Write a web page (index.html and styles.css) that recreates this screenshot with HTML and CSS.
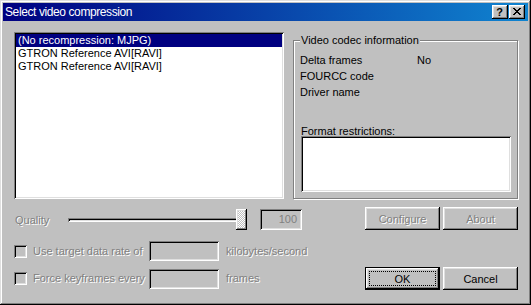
FILE: index.html
```html
<!DOCTYPE html>
<html>
<head>
<meta charset="utf-8">
<link rel="stylesheet" href="styles.css">
</head>
<body>
<div class="window">
  <div class="titlebar">
    <span class="title">Select video compression</span>
    <div class="tb-buttons">
      <span class="tb-btn help">?</span>
      <span class="tb-btn close"><svg width="8" height="7" viewBox="0 0 8 7" shape-rendering="crispEdges"><path d="M0 0h2v1H0zM6 0h2v1H6zM1 1h2v1H1zM5 1h2v1H5zM2 2h4v1H2zM3 3h2v1H3zM2 4h4v1H2zM1 5h2v1H1zM5 5h2v1H5zM0 6h2v1H0zM6 6h2v1H6z" fill="#000"/></svg></span>
    </div>
  </div>
  <div class="client">
    <div class="top">
      <div class="listbox sunken">
        <div class="item selected">(No recompression: MJPG)</div>
        <div class="item">GTRON Reference AVI[RAVI]</div>
        <div class="item">GTRON Reference AVI[RAVI]</div>
      </div>
      <div class="group">
        <span class="legend">Video codec information</span>
        <div class="info-row"><span class="info-key">Delta frames</span><span>No</span></div>
        <div class="info-row"><span class="info-key">FOURCC code</span><span></span></div>
        <div class="info-row"><span class="info-key">Driver name</span><span></span></div>
        <div class="fmt-label">Format restrictions:</div>
        <div class="fmt-box sunken"></div>
      </div>
    </div>
    <div class="row row-a">
      <span class="dis q-label">Quality</span>
      <div class="slider"><div class="track"></div><div class="thumb"></div></div>
      <div class="q-edit sunken">100</div>
      <div class="btn-pair">
        <button class="btn dis" type="button">Configure</button>
        <button class="btn dis" type="button">About</button>
      </div>
    </div>
    <div class="row row-b">
      <span class="check sunken"></span>
      <span class="dis cb-label">Use target data rate of</span>
      <span class="edit-small sunken"></span>
      <span class="dis unit">kilobytes/second</span>
    </div>
    <div class="row row-c">
      <span class="check sunken"></span>
      <span class="dis cb-label">Force keyframes every</span>
      <span class="edit-small sunken"></span>
      <span class="dis unit">frames</span>
      <div class="btn-pair">
        <button class="btn default" type="button">OK</button>
        <button class="btn" type="button">Cancel</button>
      </div>
    </div>
  </div>
</div>
</body>
</html>
```
FILE: styles.css
```css
html, body {
  margin: 0;
  padding: 0;
  background: #c0c0c0;
}
body {
  font-family: "Liberation Sans", Arial, sans-serif;
  font-size: 11px;
  color: #000;
}
.window {
  width: 531px;
  height: 305px;
  box-sizing: border-box;
  padding: 3px;
  background: #c0c0c0;
  box-shadow: inset -1px -1px #000, inset 1px 1px #dfdfdf, inset -2px -2px #808080, inset 2px 2px #fff;
}
.titlebar {
  height: 18px;
  display: flex;
  align-items: center;
  background: linear-gradient(90deg, #000080, #1084d0);
  color: #fff;
  padding-left: 2px;
  margin-bottom: 1px;
}
.title {
  flex: 1;
  font-size: 12px;
  letter-spacing: -0.4px;
  line-height: 18px;
  white-space: nowrap;
}
.tb-buttons {
  display: flex;
  gap: 1px;
  margin-right: 3px;
}
.tb-btn {
  width: 16px;
  height: 14px;
  box-sizing: border-box;
  display: flex;
  align-items: center;
  justify-content: center;
  background: #c0c0c0;
  color: #000;
  font-weight: bold;
  font-size: 11px;
  line-height: 14px;
  padding: 0 1px 1px 0;
  box-shadow: inset -1px -1px #000, inset 1px 1px #fff, inset -2px -2px #808080, inset 2px 2px #dfdfdf;
}
.tb-btn svg {
  display: block;
}
.client {
  padding: 10px 10px 0 11px;
}
.sunken {
  box-shadow: inset 1px 1px #808080, inset -1px -1px #fff, inset 2px 2px #000, inset -2px -2px #dfdfdf;
}
.top {
  display: flex;
  align-items: flex-start;
}
.listbox {
  width: 270px;
  height: 167px;
  box-sizing: border-box;
  padding: 2px;
  background: #fff;
}
.item {
  height: 13px;
  line-height: 13px;
  padding-left: 2px;
  white-space: nowrap;
}
.item.selected {
  background: #000080;
  color: #fff;
}
.group {
  position: relative;
  margin-left: 9px;
  margin-top: 8px;
  width: 225px;
  height: 159px;
  box-sizing: border-box;
  border: 1px solid #808080;
  box-shadow: 1px 1px #fff, inset 1px 1px #fff;
  padding: 11px 6px 0 6px;
}
.legend {
  position: absolute;
  top: -7px;
  left: 6px;
  padding: 0 1px;
  line-height: 13px;
  background: #c0c0c0;
  white-space: nowrap;
}
.info-row {
  display: flex;
  line-height: 16px;
  height: 16px;
}
.info-key {
  width: 117px;
}
.fmt-label {
  margin-top: 25px;
  line-height: 13px;
  padding-left: 1px;
}
.fmt-box {
  margin-top: -2px;
  margin-left: 1px;
  width: 210px;
  height: 56px;
  background: #fff;
}
.row {
  display: flex;
}
.dis {
  color: #808080;
  text-shadow: 1px 1px 0 #fff;
}
.row-a {
  margin-top: 8px;
  height: 23px;
  align-items: flex-end;
}
.q-label {
  width: 50px;
  box-sizing: border-box;
  padding-left: 1px;
  align-self: center;
  line-height: 13px;
  margin-top: 3px;
}
.slider {
  position: relative;
  width: 190px;
  height: 21px;
}
.track {
  margin: 9px 0 0 4px;
  width: 176px;
  height: 4px;
  box-shadow: inset 1px 1px #808080, inset -1px -1px #fff, inset 2px 2px #000, inset -2px -2px #dfdfdf;
}
.thumb {
  position: absolute;
  left: 172px;
  top: 0;
  width: 11px;
  height: 21px;
  background: repeating-conic-gradient(#fff 0 25%, #c0c0c0 0 50%) 0 0 / 2px 2px;
  box-shadow: inset -1px -1px #000, inset 1px 1px #fff, inset -2px -2px #808080, inset 2px 2px #dfdfdf;
}
.q-edit {
  margin-left: 6px;
  width: 42px;
  height: 21px;
  box-sizing: border-box;
  padding-right: 5px;
  text-align: right;
  line-height: 21px;
  color: #808080;
  background: #c0c0c0;
}
.btn-pair {
  margin-left: auto;
  display: flex;
  gap: 3px;
}
.btn {
  position: relative;
  width: 75px;
  height: 23px;
  border: 0;
  padding: 0;
  margin: 0;
  font-family: inherit;
  font-size: 11px;
  background: #c0c0c0;
  box-shadow: inset -1px -1px #000, inset 1px 1px #fff, inset -2px -2px #808080, inset 2px 2px #dfdfdf;
}
.btn:not(.dis) {
  color: #000;
}
.btn.default {
  box-shadow: inset 0 0 0 1px #000, inset -2px -2px #000, inset 2px 2px #fff, inset -3px -3px #808080, inset 3px 3px #dfdfdf;
}
.btn.default::after {
  content: "";
  position: absolute;
  left: 4px;
  top: 4px;
  right: 4px;
  bottom: 4px;
  border: 1px dotted #000;
}
.row-b {
  margin-top: 11px;
  height: 20px;
  align-items: center;
}
.row-c {
  margin-top: 6px;
  height: 23px;
  align-items: center;
}
.check {
  width: 13px;
  height: 13px;
  background: #c0c0c0;
  margin-right: 6px;
  flex: none;
}
.cb-label {
  width: 116px;
  line-height: 13px;
  white-space: nowrap;
}
.edit-small {
  width: 70px;
  height: 20px;
  background: #c0c0c0;
  flex: none;
}
.unit {
  margin-left: 7px;
  line-height: 13px;
  white-space: nowrap;
}
```
